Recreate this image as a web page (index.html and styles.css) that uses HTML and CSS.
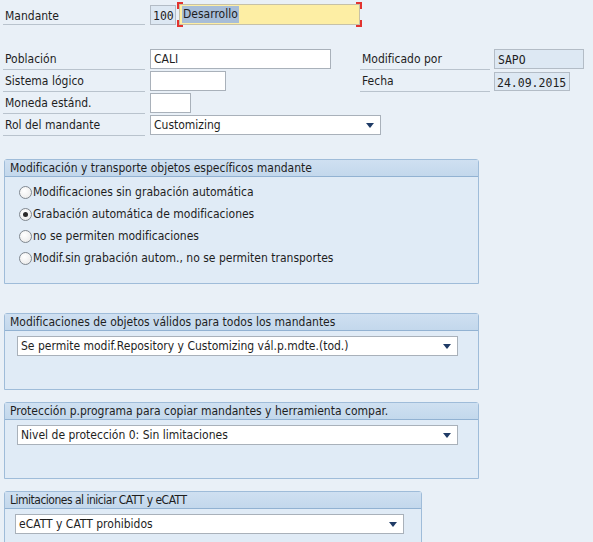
FILE: index.html
```html
<!DOCTYPE html>
<html lang="es">
<head>
<meta charset="utf-8">
<link rel="stylesheet" href="styles.css">
</head>
<body>
<div class="page">
  <div class="hdr-row">
    <span class="lbl lbl-top">Mandante</span>
    <span class="fld ro mono w-num">100</span>
    <span class="focus"><span class="fld yellow"><span class="hl">Desarrollo</span></span></span>
  </div>

  <div class="grid">
    <span class="lbl">Población</span>
    <span class="cell"><span class="fld w-city">CALI</span></span>
    <span class="lbl lbl-r">Modificado por</span>
    <span class="cell"><span class="fld ro mono w-user">SAPO</span></span>

    <span class="lbl">Sistema lógico</span>
    <span class="cell"><span class="fld w-sys"></span></span>
    <span class="lbl lbl-r">Fecha</span>
    <span class="cell"><span class="fld ro mono w-date shift">24.09.2015</span></span>

    <span class="lbl">Moneda estánd.</span>
    <span class="cell"><span class="fld w-cur"></span></span>
    <span></span><span></span>

    <span class="lbl">Rol del mandante</span>
    <span class="cell"><span class="fld dd w-role">Customizing<i class="arrow"></i></span></span>
    <span></span><span></span>
  </div>

  <section class="group g1">
    <div class="ghead">Modificación y transporte objetos específicos mandante</div>
    <div class="gbody radios">
      <div class="radio"><i class="rb"></i>Modificaciones sin grabación automática</div>
      <div class="radio"><i class="rb on"></i>Grabación automática de modificaciones</div>
      <div class="radio"><i class="rb"></i>no se permiten modificaciones</div>
      <div class="radio"><i class="rb"></i>Modif.sin grabación autom., no se permiten transportes</div>
    </div>
  </section>

  <section class="group g2">
    <div class="ghead">Modificaciones de objetos válidos para todos los mandantes</div>
    <div class="gbody sel-body">
      <span class="fld dd w-wide">Se permite modif.Repository y Customizing vál.p.mdte.(tod.)<i class="arrow"></i></span>
    </div>
  </section>

  <section class="group g3">
    <div class="ghead">Protección p.programa para copiar mandantes y herramienta compar.</div>
    <div class="gbody sel-body">
      <span class="fld dd w-wide">Nivel de protección 0: Sin limitaciones<i class="arrow"></i></span>
    </div>
  </section>

  <section class="group g4">
    <div class="ghead narrow">Limitaciones al iniciar CATT y eCATT</div>
    <div class="gbody sel-body sel-body4">
      <span class="fld dd w-catt">eCATT y CATT prohibidos<i class="arrow"></i></span>
    </div>
  </section>
</div>
</body>
</html>
```

FILE: styles.css
```css
* { box-sizing: border-box; }
html, body {
  margin: 0;
  background: #e9f0f7;
}
body {
  font-family: "DejaVu Sans Condensed", "DejaVu Sans", "Liberation Sans", sans-serif;
  font-size: 12px;
  color: #1e1e1e;
  width: 593px;
  height: 542px;
  overflow: hidden;
}
.page {
  padding: 4px 0 0 3px;
}
.hdr-row {
  display: flex;
  align-items: flex-start;
  height: 45px;
}
.lbl {
  display: block;
  width: 142px;
  height: 21px;
  padding: 3px 0 0 2px;
  margin-right: 5px;
  border-bottom: 1px solid #b9c3cd;
  white-space: nowrap;
}
.lbl-top { padding-top: 5px; }
.fld {
  display: block;
  height: 20px;
  border: 1px solid #a9b1ba;
  background: #fff;
  padding: 2px 0 0 3px;
  white-space: nowrap;
  position: relative;
}
.mono {
  font-family: "DejaVu Sans Mono", "Liberation Mono", monospace;
  font-size: 11.5px;
  padding-top: 3px;
}
.ro {
  background: #dde8f3;
  border-color: #b3bcc6;
}
.w-num { width: 26px; padding-left: 2px; margin-top: 1px; }
.focus {
  display: block;
  margin-left: 1px;
  padding: 2px;
  width: 185px;
  height: 25px;
  margin-top: -2px;
  background:
    linear-gradient(#e2332f, #e2332f) left top / 6px 2px no-repeat,
    linear-gradient(#e2332f, #e2332f) left top / 2px 7px no-repeat,
    linear-gradient(#e2332f, #e2332f) right top / 6px 2px no-repeat,
    linear-gradient(#e2332f, #e2332f) right top / 2px 7px no-repeat,
    linear-gradient(#e2332f, #e2332f) left bottom / 6px 2px no-repeat,
    linear-gradient(#e2332f, #e2332f) left bottom / 2px 7px no-repeat,
    linear-gradient(#e2332f, #e2332f) right bottom / 6px 2px no-repeat,
    linear-gradient(#e2332f, #e2332f) right bottom / 2px 7px no-repeat;
}
.yellow {
  width: 181px;
  height: 21px;
  background: #fdeea4;
  border-color: #c6c1a8;
  padding-left: 2px;
}
.hl {
  background: #a7bdd8;
  padding: 1px 1px 2px 1px;
}
.grid {
  display: grid;
  grid-template-columns: 147px 210px 134px 1fr;
  grid-auto-rows: 22px;
}
.cell { display: block; }
.lbl-r {
  width: 130px;
  margin-left: 0;
}
.w-city { width: 181px; }
.w-user { width: 90px; }
.w-sys { width: 76px; }
.w-date { width: 76px; }
.shift { margin-top: 1px; height: 19px; padding-left: 2px; }
.w-cur { width: 41px; }
.w-role { width: 231px; }
.dd { padding-right: 20px; }
.arrow {
  position: absolute;
  right: 6px;
  top: 7px;
  width: 0;
  height: 0;
  border-left: 4px solid transparent;
  border-right: 4px solid transparent;
  border-top: 5px solid #1f3b66;
}
.group {
  margin-left: 1px;
  width: 475px;
  border: 1px solid #9fbcd9;
  border-radius: 3px 3px 0 0;
  background: #e0ebf6;
}
.g1 { margin-top: 22px; }
.g2 { margin-top: 29px; }
.g3 { margin-top: 12px; }
.g4 { margin-top: 12px; width: 418px; }
.ghead {
  height: 17px;
  padding: 1px 0 0 5px;
  background: linear-gradient(#cfe0f1, #c3d8ec);
  border-bottom: 1px solid #92b2d2;
  white-space: nowrap;
}
.narrow { letter-spacing: -0.5px; }
.radios {
  padding: 4px 0 14px 14px;
}
.radio {
  display: flex;
  align-items: center;
  height: 22px;
}
.rb {
  width: 13px;
  height: 13px;
  border-radius: 50%;
  border: 1px solid #808890;
  background: radial-gradient(circle at 40% 35%, #ffffff, #e6e6e6);
  margin-right: 1px;
  position: relative;
}
.rb.on::after {
  content: "";
  position: absolute;
  left: 3px;
  top: 3px;
  width: 5px;
  height: 5px;
  border-radius: 50%;
  background: #2a2a2a;
}
.sel-body {
  padding: 5px 0 33px 12px;
}
.sel-body4 { padding-left: 10px; }
.w-wide { width: 441px; }
.w-catt { width: 389px; }
```
